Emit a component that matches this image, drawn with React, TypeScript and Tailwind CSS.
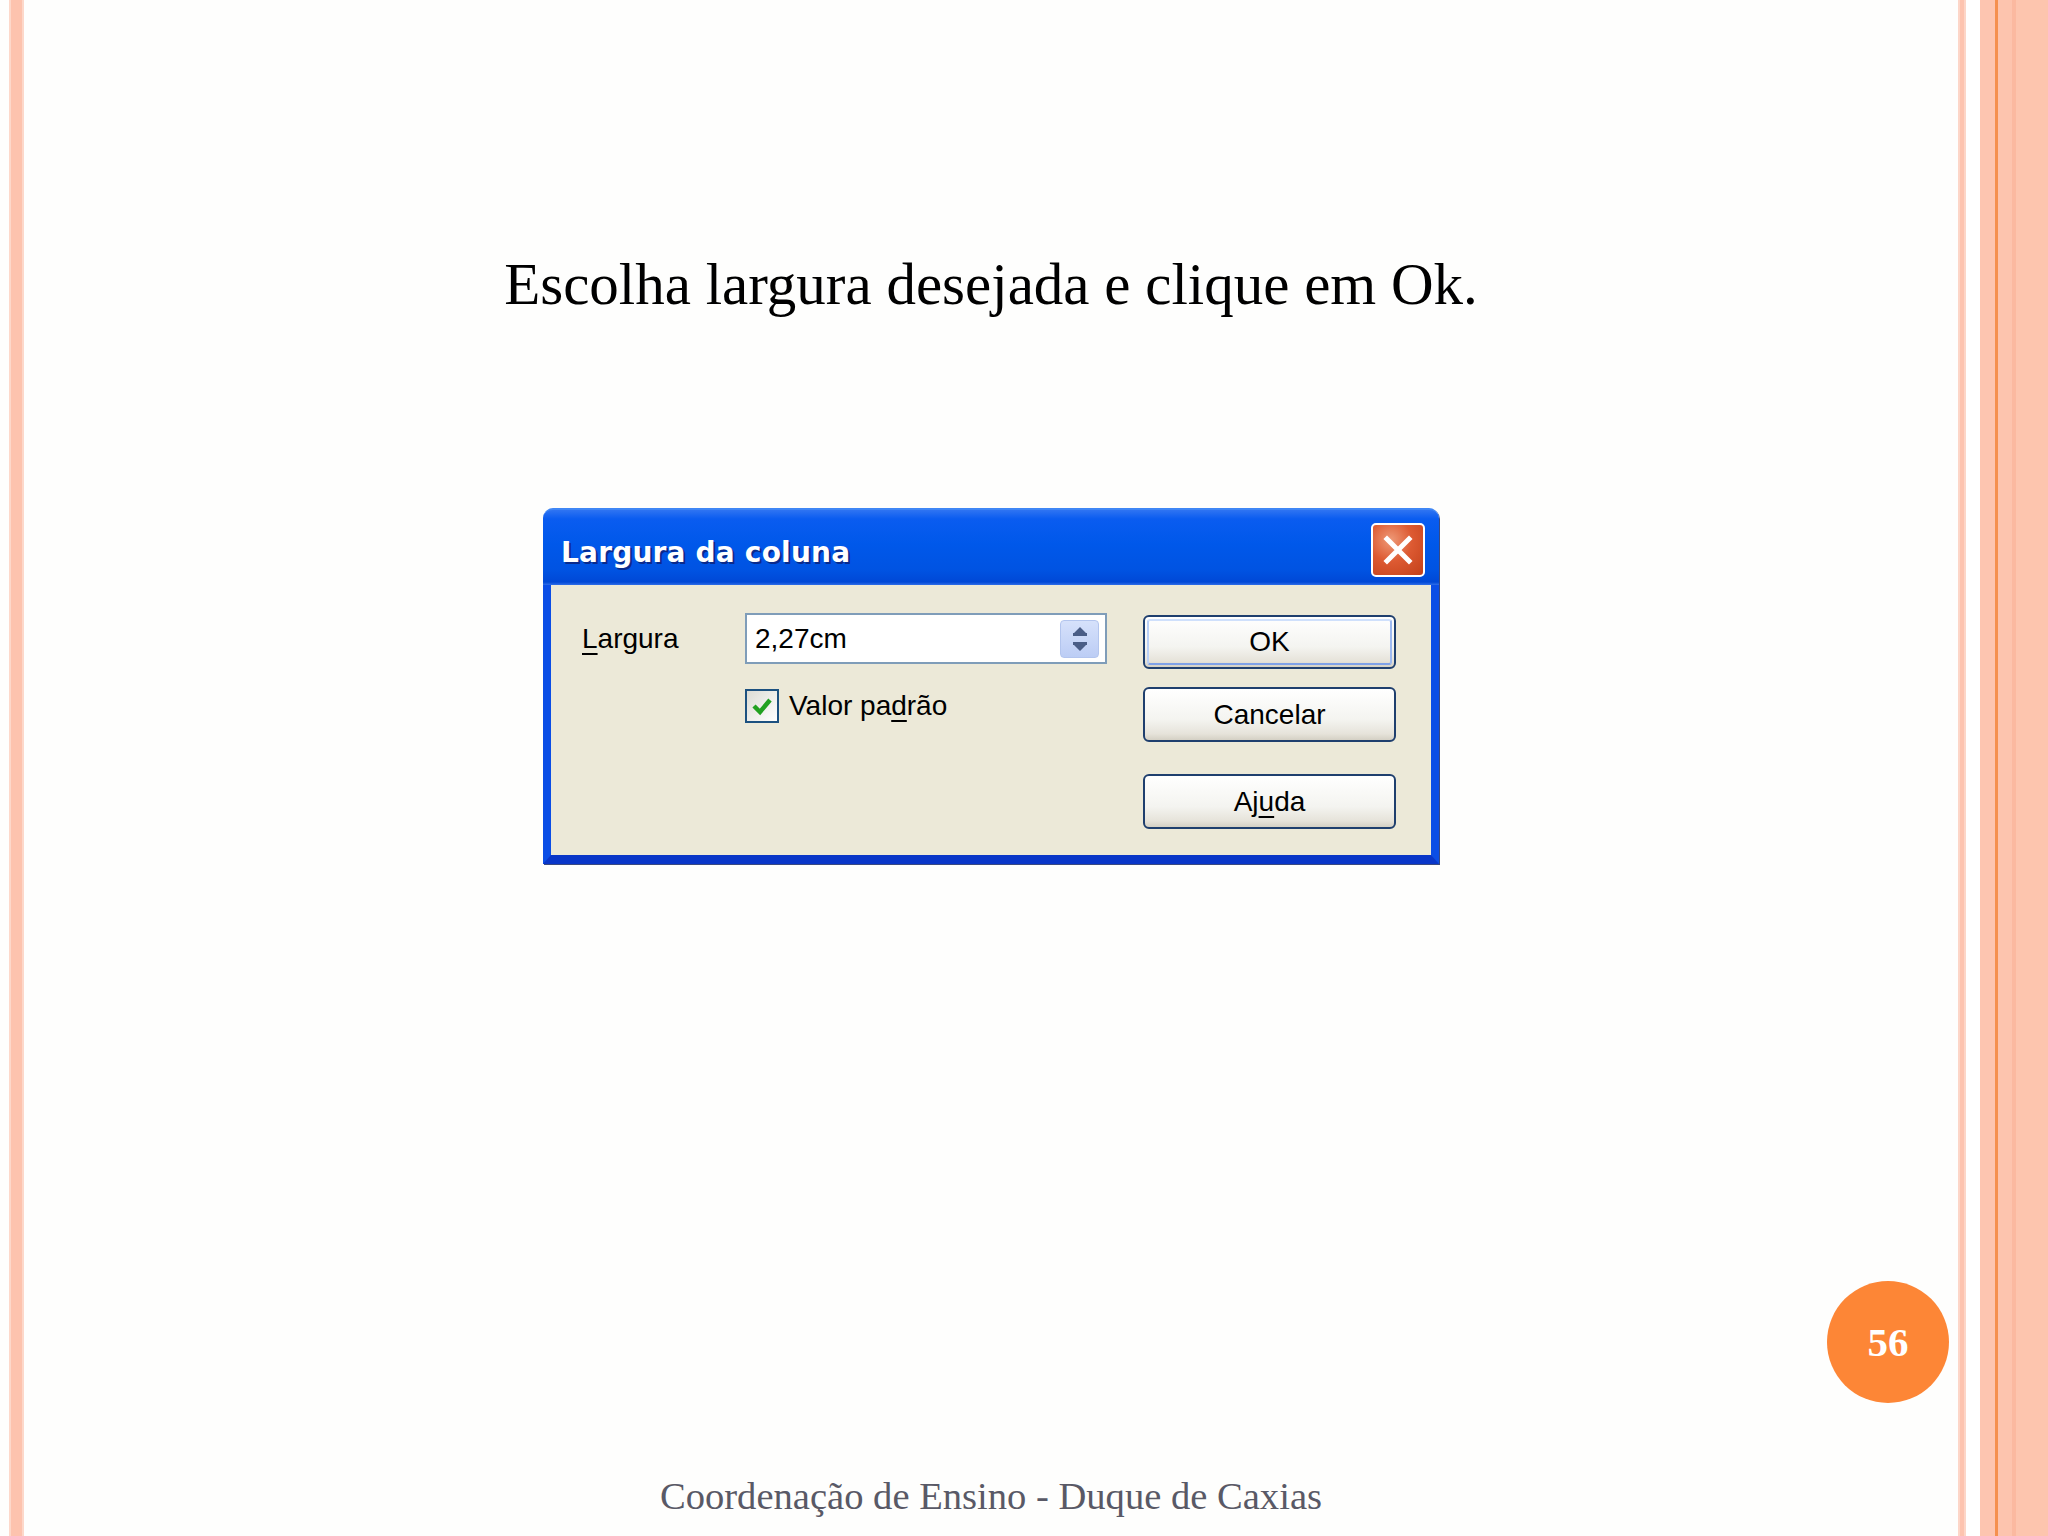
import React from 'react';

// Slide 56: "Largura da coluna" dialog in XP style

const ui = "font-['Liberation_Sans',Arial,sans-serif]";

function XpButton({ children, isDefault = false, h = 'h-[55px]' }: { children: React.ReactNode; isDefault?: boolean; h?: string }) {
  return (
    <div className={`${h} w-full rounded-[6px] border-2 border-[#1f3f6e] bg-[linear-gradient(to_bottom,#ffffff_0%,#f4f4f0_60%,#e6e3da_88%,#d4d0c4_100%)] p-[2px]`}>
      <div
        className={`flex h-full w-full items-center justify-center rounded-[3px] ${
          isDefault ? 'border-2 border-t-[#cfe0fc] border-l-[#b9d0f7] border-r-[#9db9f0] border-b-[#7fa1e8]' : ''
        } ${ui} text-[28px] leading-none text-black`}
      >
        {children}
      </div>
    </div>
  );
}

function Spinner() {
  return (
    <div className="flex h-[38px] w-[39px] items-center justify-center rounded-[4px] border border-[#b3c5ee] bg-[linear-gradient(to_bottom,#d6e1fb,#bccdf5)]">
      <svg width="20" height="28" viewBox="0 0 20 28">
        <path d="M10 2 L16 8 L17 8 L17 11 L3 11 L3 8 L4 8 Z" fill="#4a5d86" />
        <path d="M3 17 L17 17 L17 20 L16 20 L10 26 L4 20 L3 20 Z" fill="#4a5d86" />
      </svg>
    </div>
  );
}

function Dialog() {
  return (
    <div className="w-[896px] rounded-t-[10px] shadow-[1px_1px_0_#3a4a80]">
      {/* title bar */}
      <div className="flex h-[77px] items-start justify-between rounded-t-[10px] border-t-2 border-[#3f86f5] bg-[linear-gradient(to_bottom,#2f74f2_0%,#0a5cf0_12%,#0058ea_45%,#0053e2_80%,#0048d6_96%,#2f6ee8_100%)] pl-[18px] pr-[14px]">
        <span className="mt-[29px] font-['DejaVu_Sans',sans-serif] text-[28px] font-bold leading-[28px] tracking-[0.2px] text-white [text-shadow:2px_2px_0_#0a2a8c]">
          Largura da coluna
        </span>
        <div className="mt-[13px] flex h-[54px] w-[54px] items-center justify-center rounded-[5px] border-2 border-white bg-[radial-gradient(circle_at_35%_30%,#ee9a78_0%,#dd5a32_45%,#c2401a_100%)]">
          <svg width="32" height="32" viewBox="0 0 32 32">
            <path d="M5 5 L27 27 M27 5 L5 27" stroke="#ffffff" strokeWidth="5" strokeLinecap="square" />
          </svg>
        </div>
      </div>
      {/* body */}
      <div className="flex h-[279px] border-x-[8px] border-b-[9px] border-x-[#0b4ee6] border-b-[#0936c8] bg-[#ece9d8] pl-[31px] pr-[29px] pt-[28px]">
        <div className="flex w-[525px] flex-col">
          <div className="flex items-center">
            <span className={`w-[163px] ${ui} text-[28px] leading-none text-black`}>
              <u className="underline-offset-[5px] decoration-2">L</u>argura
            </span>
            <div className="flex h-[51px] w-[362px] items-center justify-between border-2 border-[#7f9db9] bg-white pl-[8px] pr-[6px]">
              <span className={`${ui} text-[28px] leading-none text-black`}>2,27cm</span>
              <Spinner />
            </div>
          </div>
          <div className="ml-[163px] mt-[25px] flex items-center gap-[10px]">
            <div className="flex h-[34px] w-[34px] items-center justify-center border-2 border-[#1c5180] bg-[linear-gradient(135deg,#dcdcd5,#ffffff)]">
              <svg width="22" height="22" viewBox="0 0 22 22">
                <path d="M3 11 L9 17 L19 5" stroke="#21a121" strokeWidth="4.5" fill="none" />
              </svg>
            </div>
            <span className={`${ui} text-[28px] leading-none text-black`}>
              Valor pa<u className="underline-offset-[5px] decoration-2">d</u>rão
            </span>
          </div>
        </div>
        <div className="ml-[36px] flex w-[253px] flex-col">
          <div className="mt-[2px]">
            <XpButton isDefault h="h-[54px]">OK</XpButton>
          </div>
          <div className="mt-[18px]">
            <XpButton>Cancelar</XpButton>
          </div>
          <div className="mt-[32px]">
            <XpButton>
              Aj<u className="underline-offset-[5px] decoration-2">u</u>da
            </XpButton>
          </div>
        </div>
      </div>
    </div>
  );
}

export default function App() {
  return (
    <div className="flex h-[1536px] w-[2048px] overflow-hidden bg-[#fefefd]">
      <div className="w-[9px]" />
      <div className="w-[15px] border-x-2 border-[#fdd8ca] bg-[#fdc3ae]" />

      <main className="relative flex flex-1 flex-col items-center">
        <h1 className="mt-[255px] font-['Liberation_Serif','Times_New_Roman',serif] text-[59px] font-normal leading-[59px] text-black">
          Escolha largura desejada e clique em Ok.
        </h1>

        <div className="mt-[194px]">
          <Dialog />
        </div>

        <p className="mt-auto pb-[20px] font-['Liberation_Serif','Times_New_Roman',serif] text-[38.6px] leading-[38.6px] text-[#595966]">
          Coordenação de Ensino - Duque de Caxias
        </p>

        <div className="absolute bottom-[133px] right-[9px] flex h-[122px] w-[122px] items-center justify-center rounded-full bg-[#fd8636]">
          <span className="font-['Liberation_Serif','Times_New_Roman',serif] text-[41px] font-bold leading-none text-white">56</span>
        </div>
      </main>

      <div className="w-[8px] border-x-2 border-[#fdd6c8] bg-[#fdc4b0]" />
      <div className="w-[14px] bg-white" />
      <div className="w-[15px] bg-[#fdc5b0]" />
      <div className="w-[3px] bg-[#f5904f]" />
      <div className="w-[14px] bg-[#fdc4ae]" />
      <div className="w-[4px] bg-[#fbb9a0]" />
      <div className="w-[32px] bg-[#fdc5ae]" />
    </div>
  );
}
